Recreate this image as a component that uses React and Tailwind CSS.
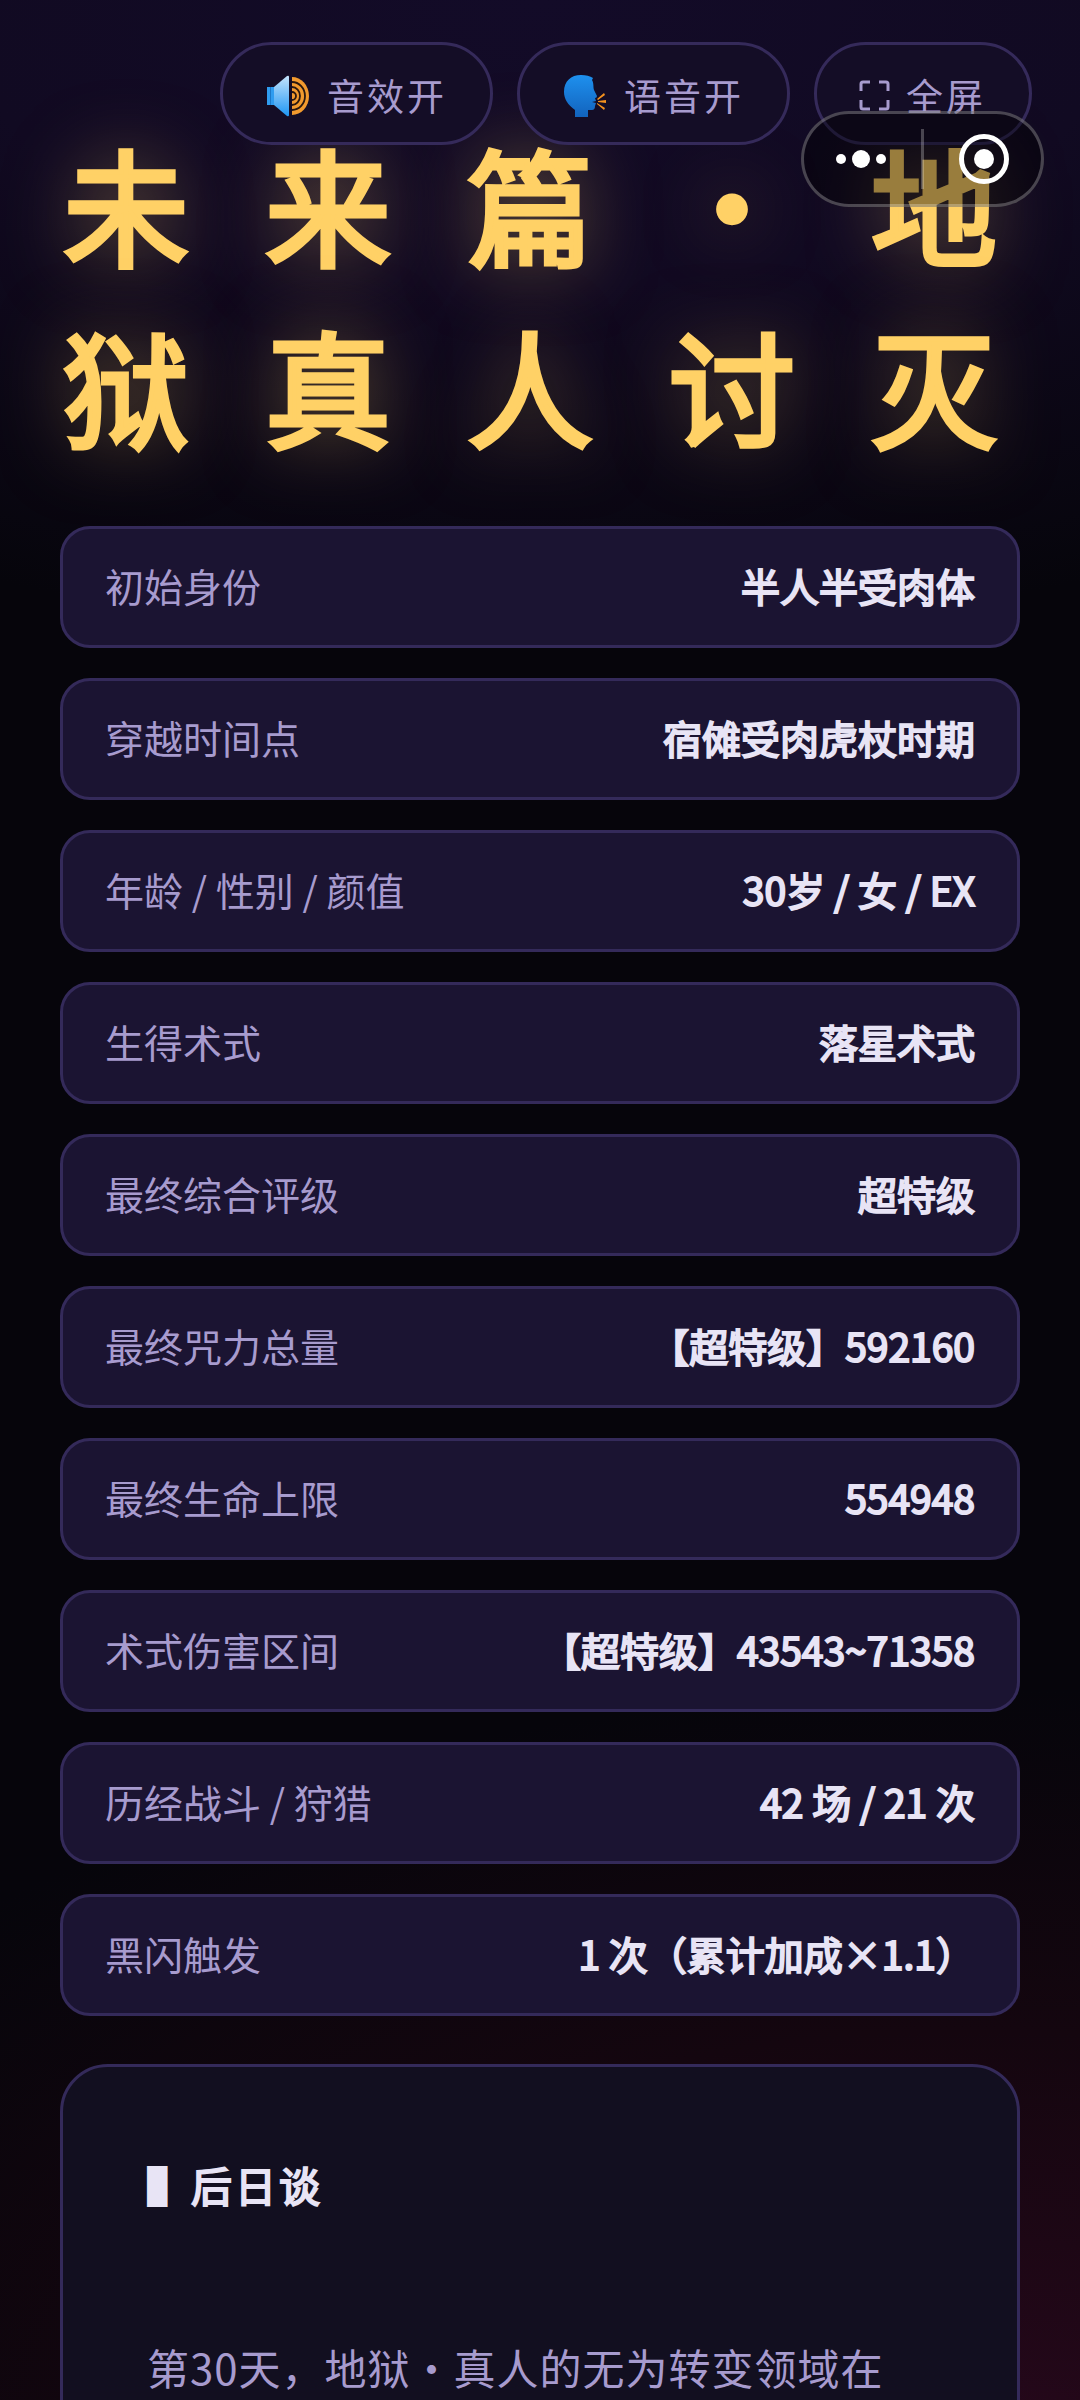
import { useState } from 'react';

const stats = [
  { label: '初始身份', value: '半人半受肉体' },
  { label: '穿越时间点', value: '宿傩受肉虎杖时期' },
  { label: '年龄 / 性别 / 颜值', value: '30岁 / 女 / EX' },
  { label: '生得术式', value: '落星术式' },
  { label: '最终综合评级', value: '超特级' },
  { label: '最终咒力总量', value: '【超特级】592160' },
  { label: '最终生命上限', value: '554948' },
  { label: '术式伤害区间', value: '【超特级】43543~71358' },
  { label: '历经战斗 / 狩猎', value: '42 场 / 21 次' },
  { label: '黑闪触发', value: '1 次（累计加成×1.1）' },
];

function SpeakerIcon() {
  return (
    <svg viewBox="0 0 42 42" className="h-[42px] w-[46px]" aria-hidden="true">
      <defs>
        <linearGradient id="cone" x1="0" y1="0" x2="0" y2="1">
          <stop offset="0" stopColor="#c4e3fc" />
          <stop offset="1" stopColor="#1e96f3" />
        </linearGradient>
      </defs>
      <path d="M0 12h8v18H0z" fill="#2f9cf0" />
      <path d="M3 12h1v18H3z" fill="#1c78c8" />
      <path d="M7 12L20 1q2-1 2 1v38q0 2-2 1L7 30z" fill="url(#cone)" />
      <path d="M25 2a17 19 0 0 1 0 38z" fill="#f29a2e" />
      <g fill="none" stroke="#2a1810" strokeWidth="1.8">
        <path d="M25 7a13 14 0 0 1 0 28M25 12a8 9 0 0 1 0 18M25 17a4 4 0 0 1 0 8" />
      </g>
    </svg>
  );
}

function SpeakingHeadIcon() {
  return (
    <svg viewBox="0 0 42 42" className="h-[42px] w-[46px]" aria-hidden="true">
      <defs>
        <linearGradient id="head" x1="0" y1="0" x2="0" y2="1">
          <stop offset="0" stopColor="#1e90ee" />
          <stop offset="1" stopColor="#1263bd" />
        </linearGradient>
      </defs>
      <path
        d="M11 42V35C4 30 0 24 0 17 0 6 7 0 17 0c5 0 9 1 12 3l-1 2c2 3 1 7 2 10l3 6q0 2-2 2l1 3-4 1 4 1-1 3q0 4-3 4h-4v7z"
        fill="url(#head)"
      />
      <path d="M33 24l7-6 1 2-7 5zM34 26l8-1v3l-8-1zM33 28l8 5-1 2-7-6z" fill="#f5921e" />
    </svg>
  );
}

function FullscreenIcon() {
  return (
    <svg
      viewBox="0 0 31 31"
      className="size-[31px]"
      fill="none"
      stroke="currentColor"
      strokeWidth="3"
      aria-hidden="true"
    >
      <path d="M2 11V4q0-2 2-2h7M20 2h7q2 0 2 2v7M29 20v7q0 2-2 2h-7M11 29H4q-2 0-2-2v-7" />
    </svg>
  );
}

function ToolButton({ icon, children, ...props }) {
  return (
    <button
      type="button"
      className="flex items-center gap-4 rounded-full border-3 border-[#352a5a] bg-[#140d26] pt-[23px] pr-[43px] pb-[19px] pl-[42px] text-[37px] leading-[55px] tracking-[3px] text-[#a79bce]"
      {...props}
    >
      {icon}
      <span>{children}</span>
    </button>
  );
}

export default function App() {
  const [sound, setSound] = useState(true);
  const [voice, setVoice] = useState(true);

  const toggleFullscreen = () => {
    if (document.fullscreenElement) {
      document.exitFullscreen();
    } else {
      document.documentElement.requestFullscreen();
    }
  };

  return (
    <div
      lang="zh-CN"
      className="relative h-screen overflow-hidden bg-[#06050b] bg-[radial-gradient(1300px_640px_at_50%_0%,#130b28_0%,#110a22_45%,transparent_100%),radial-gradient(1400px_760px_at_90%_102%,#26081b_0%,#14060f_55%,transparent_100%)] font-['Noto_Sans_CJK_SC',sans-serif]"
    >
      {/* Floating tools */}
      <header className="absolute inset-x-0 top-0 z-10 flex justify-end gap-6 px-12 pt-[42px]">
        <ToolButton icon={<SpeakerIcon />} onClick={() => setSound(!sound)}>
          {sound ? '音效开' : '音效关'}
        </ToolButton>
        <ToolButton icon={<SpeakingHeadIcon />} onClick={() => setVoice(!voice)}>
          {voice ? '语音开' : '语音关'}
        </ToolButton>
        <ToolButton icon={<FullscreenIcon />} onClick={toggleFullscreen}>
          全屏
        </ToolButton>
      </header>

      {/* Mini program capsule */}
      <div className="absolute top-[111px] right-9 z-20 flex h-24 items-center rounded-full border-3 border-white/25 bg-black/40">
        <button type="button" aria-label="更多" className="flex h-full w-[117px] items-center justify-center gap-[6px] pr-1">
          <span className="size-[10px] rounded-full bg-white" />
          <span className="size-[18px] rounded-full bg-white" />
          <span className="size-[10px] rounded-full bg-white" />
        </button>
        <span className="h-[60px] w-[3px] bg-white/25" />
        <button type="button" aria-label="关闭" className="flex h-full w-[117px] items-center justify-center pl-0.5">
          <span className="flex size-[50px] items-center justify-center rounded-full border-5 border-white">
            <span className="size-5 rounded-full bg-white" />
          </span>
        </button>
      </div>

      <main className="h-full overflow-y-auto pt-[111px] [scrollbar-width:none]">
        <h1 className="pl-[63px] text-[126px] leading-[182px] tracking-[76px] text-[#ffd166] [-webkit-text-stroke:5px_#ffd166] [text-shadow:0_0_72px_rgba(255,209,102,0.5)]">
          未来篇·地狱真人讨灭
        </h1>

        <div className="mt-[51px] flex flex-col gap-12 px-[60px]">
          <dl className="flex flex-col gap-[30px]">
            {stats.map((item) => (
              <div
                key={item.label}
                className="flex items-center justify-between rounded-[30px] border-3 border-[#342a5a] bg-[#1b1432] px-[42px] pt-7 pb-8 text-[39px] leading-[56px]"
              >
                <dt className="text-[#a79bce]">{item.label}</dt>
                <dd className="text-[#e8e4f5] [-webkit-text-stroke:2px_#e8e4f5]">{item.value}</dd>
              </div>
            ))}
          </dl>

          {/* Epilogue */}
          <section className="rounded-[48px] border-3 border-[#342a5a] bg-[#120f20] px-[84px] py-20">
            <h2 className="text-[41px] leading-[74px] tracking-[3px] text-[#e8e4f5]">
              ▌<span className="[-webkit-text-stroke:2px_#e8e4f5]">后日谈</span>
            </h2>
            <p className="mt-[116px] text-[42px] leading-[60px] tracking-[1px] text-[#a79bce]">
              第30天，地狱·真人的无为转变领域在
            </p>
          </section>
        </div>
      </main>
    </div>
  );
}
